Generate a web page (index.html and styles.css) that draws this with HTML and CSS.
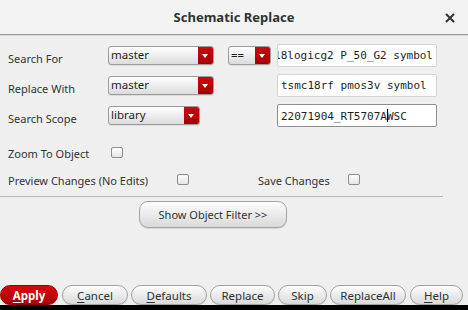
FILE: index.html
```html
<!DOCTYPE html>
<html>
<head>
<meta charset="utf-8">
<link rel="stylesheet" href="styles.css">
</head>
<body>
<div class="dialog">
  <div class="titlebar">
    <span class="title">Schematic Replace</span>
    <span class="close">
      <svg width="10" height="10" viewBox="0 0 10 10"><path d="M1 1L9 9M9 1L1 9" stroke="#2e3436" stroke-width="2"/></svg>
    </span>
  </div>

  <div class="form">
    <div class="label">Search For</div>
    <div class="combo w105"><span class="combo-text">master</span><span class="arrow"></span></div>
    <div class="combo w43"><span class="combo-text">==</span><span class="arrow"></span></div>
    <div class="field"><span class="field-text">smic18logicg2 P_50_G2 symbol</span></div>

    <div class="label">Replace With</div>
    <div class="combo w105"><span class="combo-text">master</span><span class="arrow"></span></div>
    <div></div>
    <div class="field field-left"><span class="field-text">tsmc18rf pmos3v symbol</span></div>

    <div class="label">Search Scope</div>
    <div class="combo w91"><span class="combo-text">library</span><span class="arrow"></span></div>
    <div></div>
    <div class="field field-left focus"><span class="field-text">22071904_RT5707A<span class="caret"></span>WSC</span></div>
  </div>

  <div class="check-row row-zoom">
    <span class="check-label w104">Zoom To Object</span>
    <span class="box"></span>
  </div>
  <div class="check-row row-preview">
    <span class="check-label w169">Preview Changes (No Edits)</span>
    <span class="box"></span>
    <span class="check-label w90 save">Save Changes</span>
    <span class="box"></span>
  </div>

  <div class="sep"></div>

  <div class="filter-row">
    <button class="btn filter">Show Object Filter &gt;&gt;</button>
  </div>

  <div class="spacer"></div>

  <div class="buttons">
    <button class="btn apply b58"><u>A</u>pply</button>
    <button class="btn b66"><u>C</u>ancel</button>
    <button class="btn b76"><u>D</u>efaults</button>
    <button class="btn b65">Replace</button>
    <button class="btn b49">Skip</button>
    <button class="btn b76">ReplaceAll</button>
    <button class="btn b52"><u>H</u>elp</button>
  </div>
  <div class="bottom-strip"></div>
</div>
</body>
</html>
```

FILE: styles.css
```css
* { box-sizing: border-box; }
html, body { margin: 0; padding: 0; }
body {
  width: 468px;
  height: 310px;
  overflow: hidden;
  background: #efefef;
  font-family: "Noto Sans", "Open Sans", sans-serif;
  color: #2e3436;
}
.dialog {
  width: 468px;
  height: 310px;
  display: flex;
  flex-direction: column;
  background: #efefef;
}
.titlebar {
  height: 35px;
  flex: none;
  background: #f3f3f3;
  border-bottom: 1px solid #9b9b9b;
  box-shadow: 0 1px 0 #d8d8d8;
  display: flex;
  align-items: center;
  justify-content: center;
  position: relative;
}
.title {
  font-size: 13px;
  font-weight: bold;
  color: #2e3436;
}
.close {
  position: absolute;
  right: 13px;
  top: 13px;
  width: 10px;
  height: 10px;
  display: flex;
}

.form {
  display: grid;
  grid-template-columns: 100px 120px 49px 160px;
  grid-auto-rows: 23px;
  row-gap: 7px;
  padding: 9px 0 0 8px;
  align-items: center;
}
.label {
  font-size: 11px;
  padding-top: 6px;
  color: #2e3436;
}
.combo {
  height: 19px;
  display: flex;
  border: 1px solid #9c9c9c;
  border-radius: 3px;
  background: linear-gradient(#ffffff, #dcdcdc);
  overflow: hidden;
  box-shadow: 0 1px 0 rgba(0,0,0,0.08);
}
.w105 { width: 106px; }
.w43 { width: 43px; }
.w91 { width: 92px; }
.combo-text {
  flex: 1;
  font-size: 11.5px;
  line-height: 15px;
  padding-left: 2px;
  color: #1e1e1e;
}
.arrow {
  width: 15px;
  flex: none;
  background: linear-gradient(#d0060b, #a30004);
  position: relative;
}
.arrow::after {
  content: "";
  position: absolute;
  left: 4px;
  top: 7px;
  border-left: 3.5px solid transparent;
  border-right: 3.5px solid transparent;
  border-top: 4px solid #ffffff;
}
.field {
  height: 23px;
  width: 160px;
  background: #ffffff;
  border: 1px solid #d4d4d4;
  border-radius: 2px;
  display: flex;
  justify-content: flex-end;
  align-items: center;
  overflow: hidden;
  padding-right: 3px;
}
.field-left {
  justify-content: flex-start;
  padding-left: 3px;
}
.field.focus { border-color: #8e8e8e; }
.field-text {
  font-family: "DejaVu Sans Mono", monospace;
  font-size: 11px;
  white-space: pre;
  color: #1e1e1e;
  flex: none;
}
.caret {
  display: inline-block;
  width: 1px;
  height: 13px;
  background: #000;
  vertical-align: -2px;
  margin-right: -1px;
}

.check-row {
  display: flex;
  align-items: center;
  padding-left: 8px;
  font-size: 11px;
}
.row-zoom { margin-top: 16px; height: 20px; }
.row-preview { margin-top: 7px; height: 20px; }
.check-label { display: inline-block; }
.w104 { width: 103px; }
.w169 { width: 169px; }
.w90 { width: 90px; }
.save { margin-left: 69px; }
.box {
  width: 12px;
  height: 11px;
  border: 1px solid #8d8d8d;
  border-radius: 2px;
  background: linear-gradient(#ffffff, #e4e4e4);
  margin-top: -2px;
}

.sep {
  width: 443px;
  height: 1px;
  background: #b8b8b8;
  margin-top: 6px;
}

.filter-row {
  padding-left: 139px;
  margin-top: 4px;
}
.btn {
  font-family: "Noto Sans", "Open Sans", sans-serif;
  font-size: 11px;
  color: #2e3436;
  border: 1px solid #a3a3a3;
  background: linear-gradient(#fdfdfd, #d9d9d9);
  border-radius: 10px;
  padding: 0;
  margin: 0;
  box-shadow: 0 1px 0 rgba(0,0,0,0.1);
}
.filter {
  width: 148px;
  height: 27px;
  border-radius: 9px;
}
.spacer { flex: 1; }
.buttons {
  display: flex;
  gap: 3px;
  height: 20px;
  flex: none;
}
.buttons .btn { height: 20px; line-height: 17px; font-size: 11.5px; }
.btn u { text-decoration: underline; text-underline-offset: 2px; }
.apply {
  background: linear-gradient(#d8080e, #a60005);
  border-color: #9a0004;
  color: #ffffff;
  font-weight: bold;
}
.b58 { width: 58px; }
.b66 { width: 66px; margin-left: 1px; }
.b76 { width: 76px; }
.b65 { width: 65px; }
.b49 { width: 49px; }
.b52 { width: 53px; margin-left: 1px; }
.bottom-strip {
  height: 5px;
  background: #000000;
  flex: none;
}
```
